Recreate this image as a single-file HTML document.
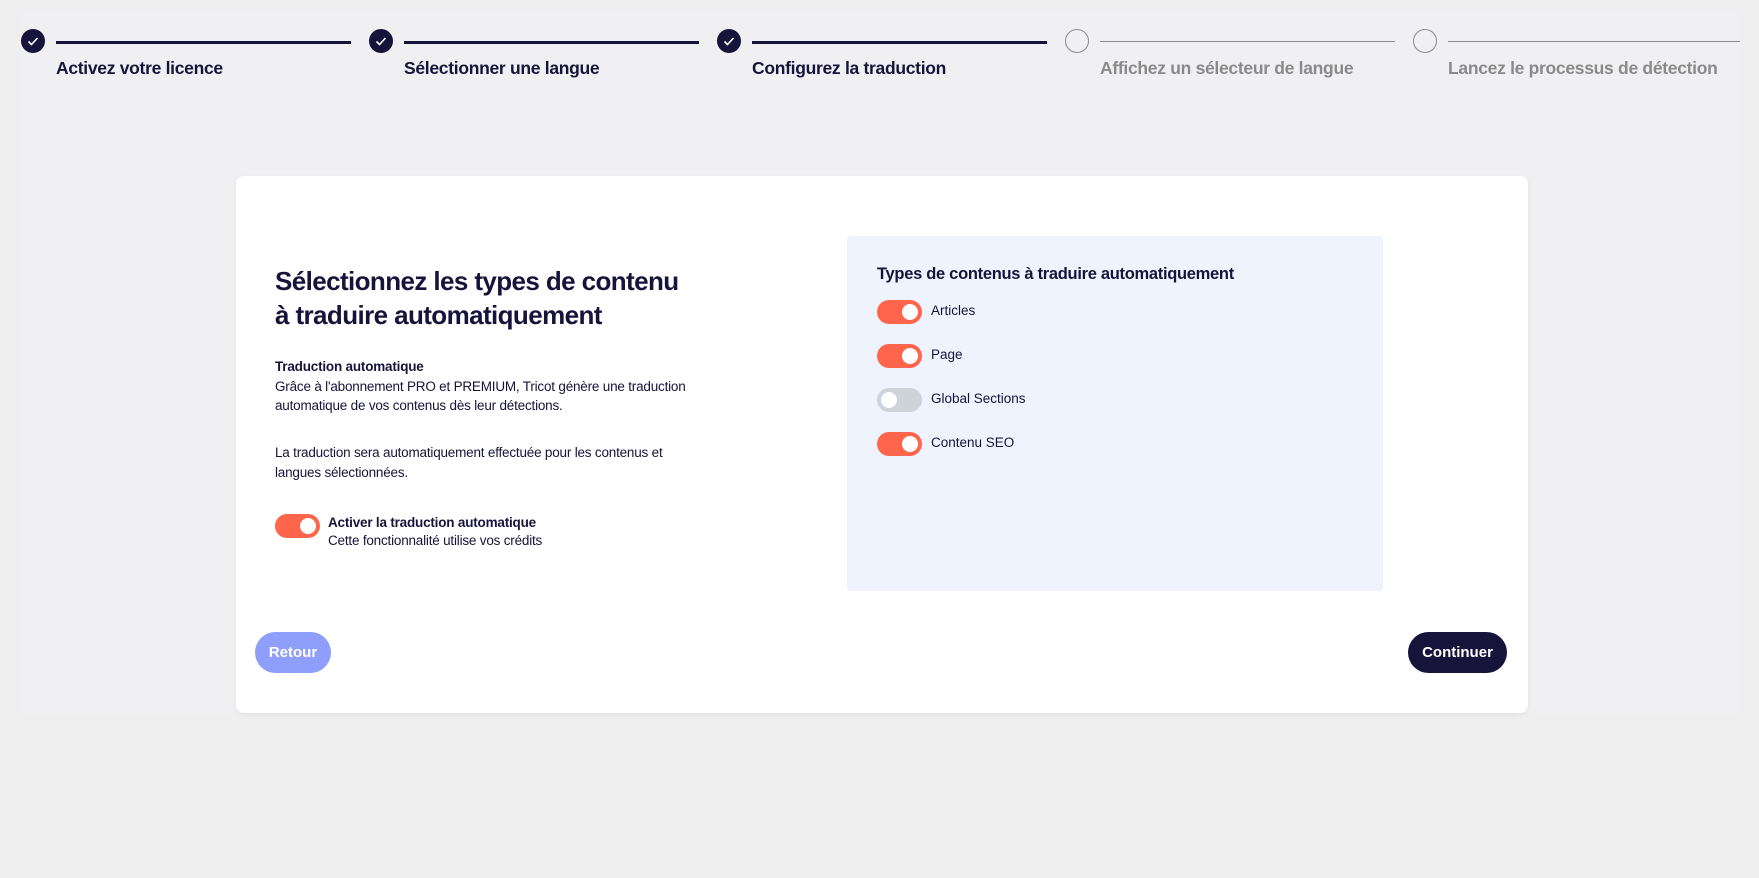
<!DOCTYPE html>
<html><head><meta charset="utf-8"><style>
*{box-sizing:border-box;margin:0;padding:0}
body{width:1759px;height:878px;background:#efefef;font-family:"Liberation Sans",sans-serif;color:#16143a;position:relative;overflow:hidden}
.inner{position:absolute;left:20px;top:11px;width:1719px;height:703px;background:#f0f0f2}
.step{position:absolute;top:29px}
.circ{position:absolute;left:0;top:0;width:24px;height:24px;border-radius:50%;background:#16143a}
.circ.off{background:none;border:1.2px solid #8a8a8a}
.line{position:absolute;left:35px;top:12px;height:3px;background:#16143a;width:295px}
.line.off{height:1px;background:#8a8a8a;top:12px}
.lbl{position:absolute;left:35px;top:29px;white-space:nowrap;font-size:17.5px;letter-spacing:-0.3px;font-weight:bold;color:#16143a}
.lbl.off{color:#8a8a8a}
.card{position:absolute;left:236px;top:176px;width:1292px;height:537px;background:#fff;border-radius:8px;box-shadow:0 2px 6px rgba(0,0,0,.06)}
h1{position:absolute;left:275px;top:264px;font-size:26px;line-height:34px;font-weight:bold;color:#16143a;letter-spacing:-0.6px}
.p{position:absolute;left:275px;font-size:13.5px;line-height:19.6px;color:#16143a;letter-spacing:-0.2px}
.tg{position:absolute;width:45px;height:24px;border-radius:12px;background:#ff654b}
.tg::after{content:"";position:absolute;right:4px;top:4px;width:16px;height:16px;border-radius:50%;background:#fff}
.tg.off{background:#ccd3d9}.tg.off::after{right:auto;left:4px}
.panel{position:absolute;left:847px;top:236px;width:536px;height:355px;background:#eef3fd;border-radius:3px}
.pt{position:absolute;left:877px;top:265px;font-size:16.5px;font-weight:bold;letter-spacing:-0.3px}
.it{position:absolute;left:931px;font-size:13.5px}
.btn{position:absolute;top:632px;height:41px;border-radius:21px;color:#fff;font-weight:bold;font-size:15px;line-height:41px;text-align:center}
</style></head><body>
<div class="inner"></div>
<div class="step" style="left:21px"><div class="circ"><svg width="24" height="24"><path d="M7.5 12.5l3 3 6-6.5" stroke="#fff" stroke-width="1.6" fill="none"/></svg></div><div class="line"></div><div class="lbl">Activez votre licence</div></div>
<div class="step" style="left:369px"><div class="circ"><svg width="24" height="24"><path d="M7.5 12.5l3 3 6-6.5" stroke="#fff" stroke-width="1.6" fill="none"/></svg></div><div class="line"></div><div class="lbl">Sélectionner une langue</div></div>
<div class="step" style="left:717px"><div class="circ"><svg width="24" height="24"><path d="M7.5 12.5l3 3 6-6.5" stroke="#fff" stroke-width="1.6" fill="none"/></svg></div><div class="line"></div><div class="lbl">Configurez la traduction</div></div>
<div class="step" style="left:1065px"><div class="circ off"></div><div class="line off"></div><div class="lbl off">Affichez un sélecteur de langue</div></div>
<div class="step" style="left:1413px"><div class="circ off"></div><div class="line off" style="width:292px"></div><div class="lbl off">Lancez le processus de détection</div></div>

<div class="card"></div>
<h1>Sélectionnez les types de contenu<br>à traduire automatiquement</h1>
<div class="p" style="top:357px"><b>Traduction automatique</b><br>Grâce à l'abonnement PRO et PREMIUM, Tricot génère une traduction<br>automatique de vos contenus dès leur détections.</div>
<div class="p" style="top:443px">La traduction sera automatiquement effectuée pour les contenus et<br>langues sélectionnées.</div>
<div class="tg" style="left:275px;top:514px"></div>
<div class="p" style="left:328px;top:514px;line-height:18px"><b>Activer la traduction automatique</b><br>Cette fonctionnalité utilise vos crédits</div>

<div class="panel"></div>
<div class="pt">Types de contenus à traduire automatiquement</div>
<div class="tg" style="left:877px;top:300px"></div><div class="it" style="top:303px">Articles</div>
<div class="tg" style="left:877px;top:344px"></div><div class="it" style="top:347px">Page</div>
<div class="tg off" style="left:877px;top:388px"></div><div class="it" style="top:391px">Global Sections</div>
<div class="tg" style="left:877px;top:432px"></div><div class="it" style="top:435px">Contenu SEO</div>

<div class="btn" style="left:255px;width:76px;background:#8f9efa">Retour</div>
<div class="btn" style="left:1408px;width:99px;background:#16143a">Continuer</div>
</body></html>
